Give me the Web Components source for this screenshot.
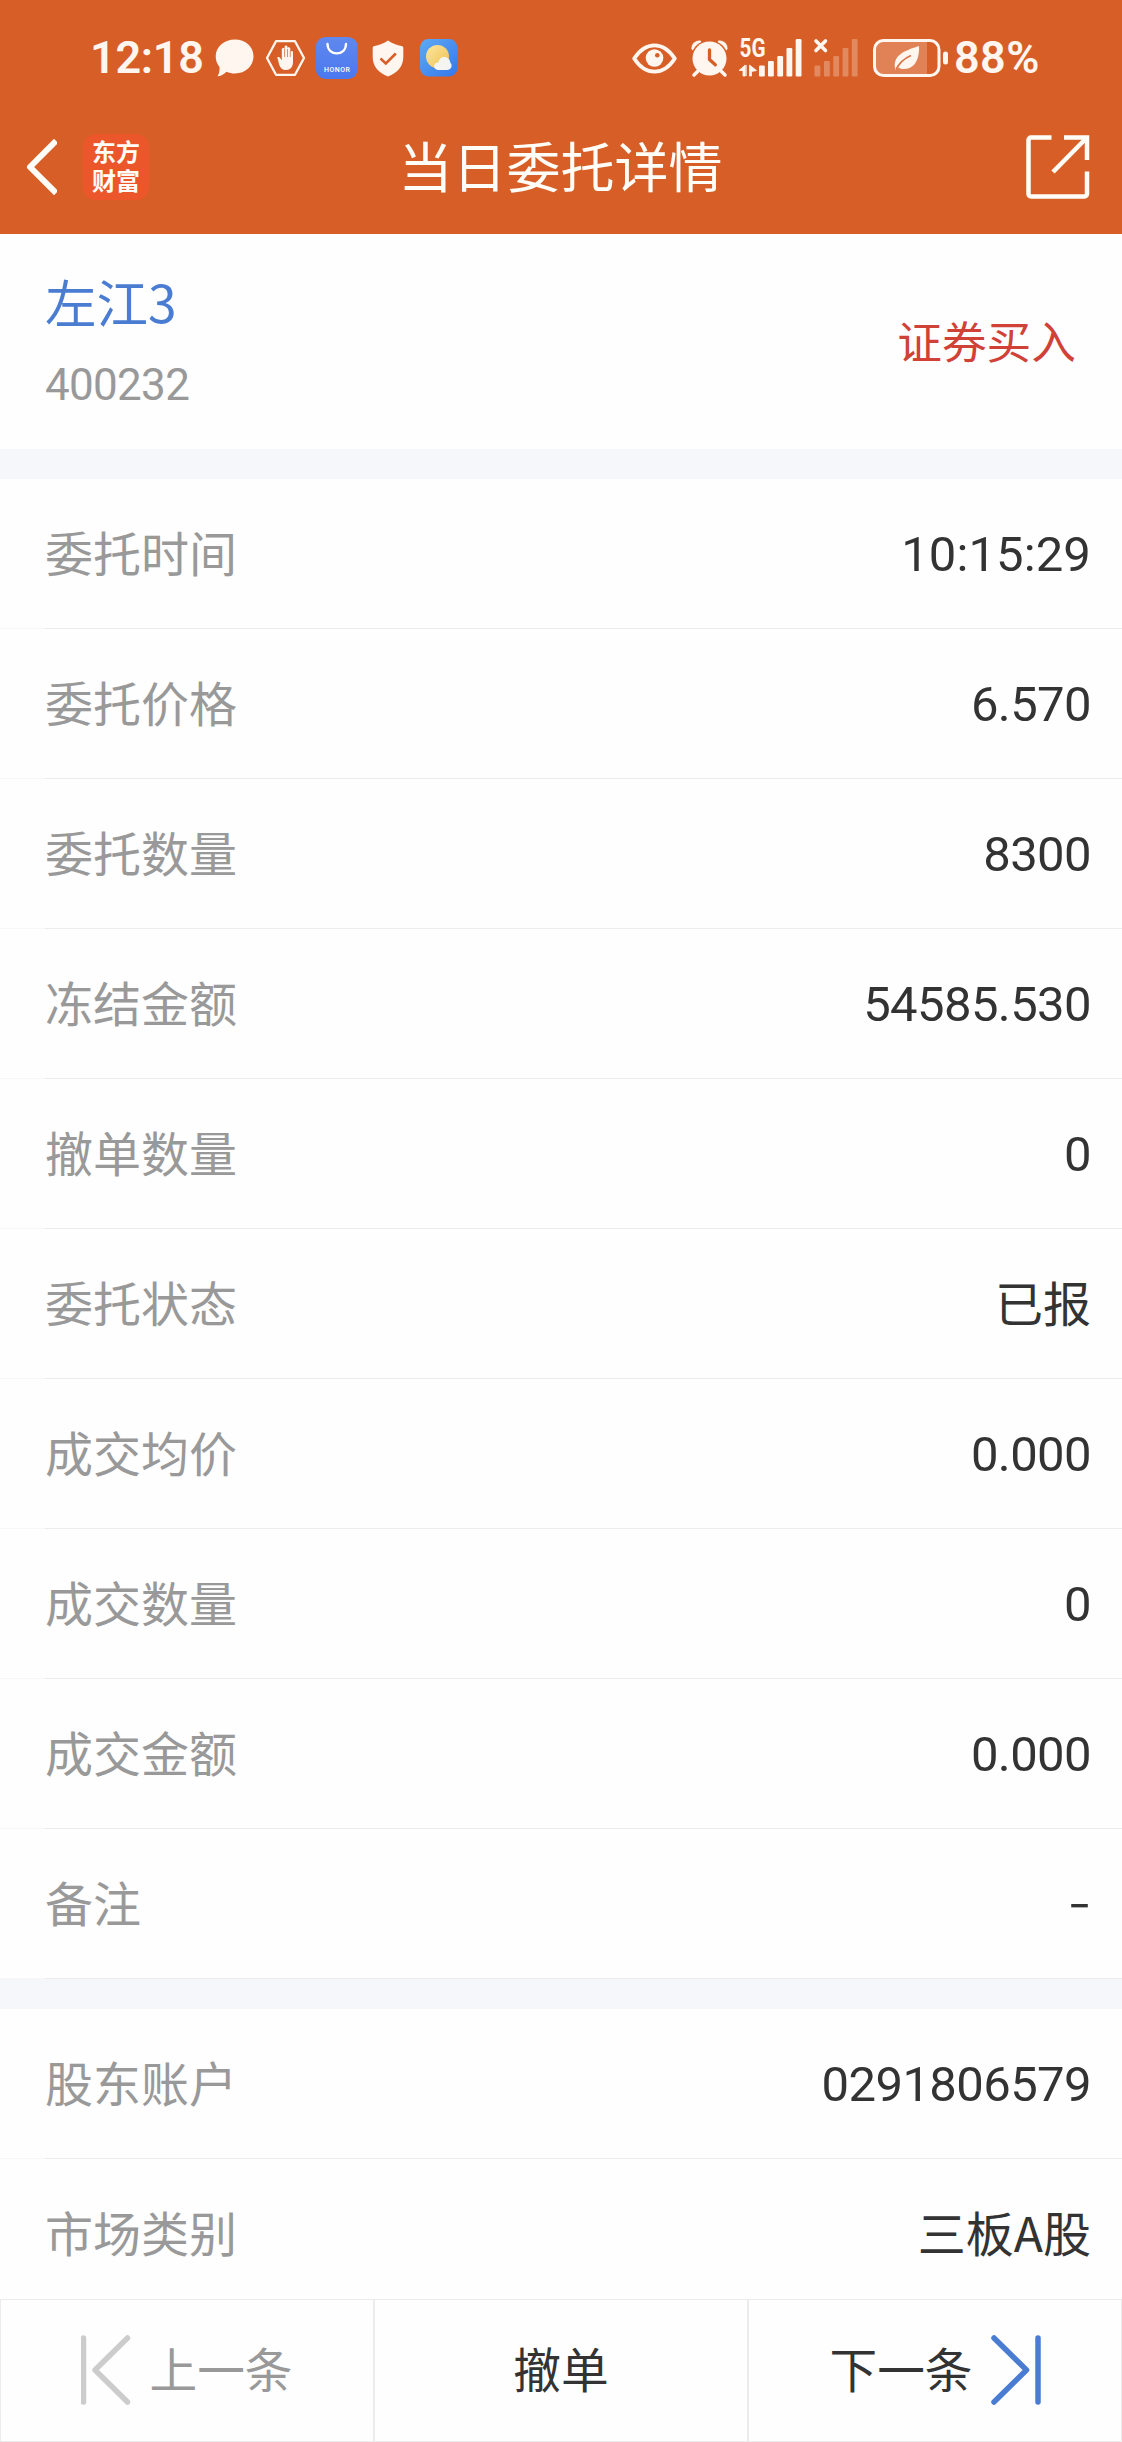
<!DOCTYPE html>
<html lang="zh-CN">
<head>
<meta charset="utf-8">
<title>当日委托详情</title>
<style>
  html, body {
    margin: 0;
    background: #fefefe;
  }

  body {
    font-family: "Noto Sans CJK SC", sans-serif;
    color: #333;
  }
</style>
</head>
<body>
<order-page>
  <status-bar slot="top" time="12:18" battery="88%"></status-bar>
  <title-bar slot="top">当日委托详情</title-bar>

  <stock-head code="400232" side="证券买入">左江3</stock-head>
  <detail-group>
    <detail-row label="委托时间" num="time">10:15:29</detail-row>
    <detail-row label="委托价格" num>6.570</detail-row>
    <detail-row label="委托数量" num>8300</detail-row>
    <detail-row label="冻结金额" num>54585.530</detail-row>
    <detail-row label="撤单数量" num>0</detail-row>
    <detail-row label="委托状态">已报</detail-row>
    <detail-row label="成交均价" num>0.000</detail-row>
    <detail-row label="成交数量" num>0</detail-row>
    <detail-row label="成交金额" num>0.000</detail-row>
    <detail-row label="备注" dash>-</detail-row>
  </detail-group>
  <detail-group>
    <detail-row label="股东账户" num>0291806579</detail-row>
    <detail-row label="市场类别">三板A股</detail-row>
  </detail-group>

  <action-bar slot="bottom"></action-bar>
</order-page>

<script>
class OrderPage extends HTMLElement {
  constructor() {
    super();
    this.attachShadow({ mode: 'open' });
    this.shadowRoot.innerHTML = `
      <style>
        :host {
          display: flex;
          flex-direction: column;
          width: 1122px;
          height: 2442px;
          overflow: hidden;
        }

        header {
          background: #d75f27;
          flex: none;
        }

        main {
          flex: 1;
          min-height: 0;
          overflow: hidden;
        }

        footer {
          flex: none;
        }
      </style>
      <header><slot name="top"></slot></header>
      <main><slot></slot></main>
      <footer><slot name="bottom"></slot></footer>
    `;
  }
}

class StatusBar extends HTMLElement {
  constructor() {
    super();
    this.attachShadow({ mode: 'open' });
    this.shadowRoot.innerHTML = `
      <style>
        :host {
          display: flex;
          justify-content: space-between;
          box-sizing: border-box;
          height: 100px;
          padding: 16px 82px 0 90px;
          color: #fff6f0;
          font: 600 45px/84px Roboto, sans-serif;
        }

        div {
          display: flex;
          align-items: center;
        }

        svg {
          display: block;
          flex: none;
          overflow: visible;
          fill: #fff6f0;
        }

        .time {
          width: 125px;
          letter-spacing: -0.3px;
          white-space: nowrap;
        }

        .level {
          margin-left: 5px;
          width: 86px;
          letter-spacing: 0.4px;
          white-space: nowrap;
        }
      </style>
      <div>
        <span class="time">${this.getAttribute('time')}</span>
        <!-- message -->
        <svg width="39" height="38" viewBox="0 0 39 38">
          <path d="M20 0.500C30.500 0.500 38.500 7.500 38.500 17.300S30.500 34.500 20 34.500c-3.200 0-6-.6-8.500-1.800C9 35.500 5.500 37 2.500 37.300 4.200 34.500 4.800 31.500 4.500 28 2 25 .700 21.500.700 17.300.700 7.500 9.500.500 20 .500z"/>
        </svg>
        <!-- blocked -->
        <svg width="41" height="38" viewBox="0 0 41 38" style="margin-left:11px">
          <path d="M11 2.200h19L39 19 30 35.800H11L2 19z" fill="none" stroke="#fff6f0" stroke-width="2.300" stroke-linejoin="round"/>
          <path d="M12.300 18.500c1-.9 2.500-.2 3.200 1l1.300 2V10.500c0-2 2.800-2 2.800 0V8c0-2 2.900-2 2.900 0v1.500c.3-1.800 2.800-1.500 2.800.300V13c.3-1.600 2.700-1.400 2.700.4V23c0 4.800-2.600 8-7 8-3.600 0-5.500-2-6.700-5z"/>
          <path d="M19.600 10v8M22.500 10v8M25.300 12v6" stroke="#d75f27" stroke-width=".7"/>
        </svg>
        <!-- app market -->
        <svg width="42" height="42" viewBox="0 0 42 42" style="margin-left:10px">
          <defs>
            <linearGradient id="m" x1="0" y1="0" x2="0" y2="1">
              <stop offset="0" stop-color="#6088ee"/>
              <stop offset="1" stop-color="#4a78f0"/>
            </linearGradient>
          </defs>
          <rect width="41.500" height="42" rx="9.500" fill="url(#m)"/>
          <path d="M11.500 7c0 12.500 18.500 12.500 18.500 0" fill="none" stroke="#fff" stroke-width="2.300" stroke-linecap="round"/>
          <text x="8" y="34.500" font-family="Roboto, sans-serif" font-size="7" font-weight="500" fill="#fff" textLength="26" lengthAdjust="spacing">HONOR</text>
        </svg>
        <!-- shield -->
        <svg width="32" height="37" viewBox="0 0 32 37" style="margin-left:14px">
          <path d="M16 .5C20 3.500 25 5.300 29.500 6c1.200.2 1.800.9 1.800 2v9c0 9.500-6 16-15.300 19.500C6.700 33 .7 26.500.7 17V8c0-1.100.600-1.800 1.800-2C7 5.300 12 3.500 16 .5z"/>
          <path d="M8.500 18.500l5.300 5 10-10" fill="none" stroke="#d75f27" stroke-width="2.600"/>
        </svg>
        <!-- weather -->
        <svg width="38" height="38" viewBox="0 0 38 38" style="margin-left:16px">
          <defs>
            <linearGradient id="w" x1="0" y1="0" x2="1" y2="1">
              <stop offset="0" stop-color="#5eaaf5"/>
              <stop offset="1" stop-color="#3577ea"/>
            </linearGradient>
            <linearGradient id="s" x1="0" y1="0" x2="1" y2="1">
              <stop offset="0" stop-color="#fbe7a0"/>
              <stop offset="1" stop-color="#f0c04e"/>
            </linearGradient>
          </defs>
          <rect width="37.500" height="37.500" rx="8.500" fill="url(#w)"/>
          <circle cx="17.500" cy="17.500" r="11.500" fill="url(#s)"/>
          <path d="M18 31c-5.500-.5-5-7.500.5-7.500.8-7.500 11-7.500 12 .5 2 1.500 1.500 7-3.500 7z" fill="#f4f5f1"/>
        </svg>
      </div>
      <div>
        <!-- eye comfort -->
        <svg width="45" height="31" viewBox="0 0 45 31">
          <path d="M2.200 15.500C8 6.500 14.500 2.300 22.500 2.300S37 6.500 42.800 15.500C37 24.500 30.500 28.700 22.500 28.700S8 24.500 2.200 15.500z" fill="none" stroke="#fff6f0" stroke-width="3.800" stroke-linejoin="round"/>
          <circle cx="22.500" cy="15" r="8.800"/>
          <circle cx="25.300" cy="12.200" r="2.300" fill="#d75f27"/>
        </svg>
        <!-- alarm -->
        <svg width="37" height="37" viewBox="0 0 37 37" style="margin-left:14px">
          <circle cx="18.500" cy="18.500" r="17"/>
          <path d="M0 9C0 3.500 4 0 9.500 0L11 2.200C6.500 4 3.700 7 2 11zM37 9C37 3.500 33 0 27.500 0L26 2.200C30.500 4 33.300 7 35 11z" stroke="#d75f27" stroke-width=".8"/>
          <path d="M7 31l-4 4M30 31l4 4" stroke="#fff6f0" stroke-width="3.500" stroke-linecap="round"/>
          <path d="M18.500 10v9.500l5.800 5.300" fill="none" stroke="#d75f27" stroke-width="3.300" stroke-linecap="round" stroke-linejoin="round"/>
        </svg>
        <!-- sim 1 -->
        <svg width="64" height="38" viewBox="0 0 64 38" style="margin-left:11px">
          <text x="0.500" y="18" font-family="Roboto, sans-serif" font-size="25" font-weight="700" textLength="26" lengthAdjust="spacingAndGlyphs">5G</text>
          <path d="M6.300 26v11H4v-5.500H0zM7.300 26V37M10.500 26v11h2v-4.500l5-1z" stroke="#fff6f0" stroke-width=".8"/>
          <rect x="20" y="26.500" width="5.800" height="11" rx="1.200"/>
          <rect x="29" y="22" width="5.800" height="15.500" rx="1.200"/>
          <rect x="38.300" y="17" width="5.800" height="20.500" rx="1.200"/>
          <rect x="47.500" y="9" width="5.800" height="28.500" rx="1.200"/>
          <rect x="56.700" y="0" width="5.800" height="37.500" rx="1.200"/>
        </svg>
        <!-- sim 2 -->
        <svg width="45" height="38" viewBox="0 0 45 38" style="margin-left:11px">
          <path d="M2 2l9.500 9.500M11.500 2L2 11.500" stroke="#fff6f0" stroke-width="3.600" stroke-linecap="round"/>
          <g opacity=".28">
            <rect x=".5" y="26.500" width="5.800" height="11" rx="1.200"/>
            <rect x="10" y="22" width="5.800" height="15.500" rx="1.200"/>
            <rect x="19.300" y="17" width="5.800" height="20.500" rx="1.200"/>
            <rect x="28.600" y="9" width="5.800" height="28.500" rx="1.200"/>
            <rect x="37.800" y="0" width="5.800" height="37.500" rx="1.200"/>
          </g>
        </svg>
        <!-- battery -->
        <svg width="76" height="38" viewBox="0 0 76 38" style="margin-left:14px">
          <path d="M10 2h44v34H10a8 8 0 0 1-8-8V10a8 8 0 0 1 8-8z" opacity=".23"/>
          <rect x="1.500" y="1.500" width="64.500" height="35" rx="9" fill="none" stroke="#fff6f0" stroke-width="3"/>
          <rect x="70" y="12.500" width="5" height="13" rx="2.500"/>
          <path d="M46 7c.6 12-3.500 23-15 23-2 0-4-.5-5.200-1.500L22.500 31C19 17 30 12 46 7z"/>
          <path d="M23 30.500c3.500-7 8-11 15-14" fill="none" stroke="#dd7546" stroke-width="1.800"/>
        </svg>
        <span class="level">${this.getAttribute('battery')}</span>
      </div>
    `;
  }
}

class TitleBar extends HTMLElement {
  constructor() {
    super();
    this.attachShadow({ mode: 'open' });
    this.shadowRoot.innerHTML = `
      <style>
        :host {
          display: grid;
          grid-template-columns: 1fr auto 1fr;
          align-items: center;
          box-sizing: border-box;
          height: 134px;
          padding: 0 32px 0 24px;
          color: #fffdf8;
        }

        .left {
          display: flex;
          align-items: center;
        }

        .logo {
          width: 66px;
          height: 66px;
          box-sizing: border-box;
          margin-left: 26px;
          padding-top: 4px;
          border-radius: 13px;
          background: #ec562b;
          font-family: "Liberation Sans", "Noto Sans CJK SC", sans-serif;
          font-size: 24px;
          font-weight: 700;
          line-height: 29px;
          text-align: center;
        }

        h1 {
          margin: 0;
          padding: 0 0 5px 7px;
          font-size: 54px;
          font-weight: 400;
          line-height: 80px;
        }

        .share {
          justify-self: end;
        }

        svg {
          display: block;
          fill: none;
          stroke: #fffdf8;
        }
      </style>
      <div class="left">
        <svg width="33" height="56" viewBox="0 0 33 56">
          <path d="M30 4L6 28l24 24" stroke-width="6" stroke-linecap="square" stroke-linejoin="round"/>
        </svg>
        <div class="logo">东方<br>财富</div>
      </div>
      <h1><slot></slot></h1>
      <svg class="share" width="64" height="64" viewBox="0 0 64 64" stroke-width="4.500">
        <path d="M25.500 2.500H5a2.500 2.500 0 0 0-2.500 2.500V59A2.500 2.500 0 0 0 5 61.500H58.500A2.500 2.500 0 0 0 61 59V36.500"/>
        <path d="M38 2.500H61V25M60 3.500L27 37"/>
      </svg>
    `;
  }
}

class StockHead extends HTMLElement {
  constructor() {
    super();
    this.attachShadow({ mode: 'open' });
    this.shadowRoot.innerHTML = `
      <style>
        :host {
          display: flex;
          justify-content: space-between;
          align-items: center;
          box-sizing: border-box;
          height: 215px;
          padding: 0 46px 0 45px;
        }

        .info {
          padding-top: 4px;
        }

        .name {
          color: #4a7dd2;
          font-size: 51.500px;
          line-height: 77px;
        }

        .code {
          padding-top: 6px;
          color: #999;
          font: 44px/80px Roboto, sans-serif;
          letter-spacing: -0.7px;
        }

        .side {
          padding-bottom: 3px;
          color: #d04137;
          font-size: 44.700px;
          line-height: 68px;
        }
      </style>
      <div class="info">
        <div class="name"><slot></slot></div>
        <div class="code">${this.getAttribute('code')}</div>
      </div>
      <div class="side">${this.getAttribute('side')}</div>
    `;
  }
}

class DetailGroup extends HTMLElement {
  constructor() {
    super();
    this.attachShadow({ mode: 'open' });
    this.shadowRoot.innerHTML = `
      <style>
        :host {
          display: block;
          border-top: 30px solid #f6f7fa;
        }
      </style>
      <slot></slot>
    `;
  }
}

class DetailRow extends HTMLElement {
  constructor() {
    super();
    this.attachShadow({ mode: 'open' });
    this.shadowRoot.innerHTML = `
      <style>
        :host {
          display: flex;
          justify-content: space-between;
          align-items: center;
          box-sizing: border-box;
          height: 150px;
          padding: 0 31px 6px 45px;
          font-size: 48px;
          line-height: 72px;
          background: linear-gradient(90deg, #f7f7f7 45px, #ececec 45px) bottom / 100% 1px no-repeat;
        }

        .label {
          color: #999;
        }

        :host([num]) .value {
          padding-top: 7px;
          font-family: Roboto, sans-serif;
          font-size: 49px;
          letter-spacing: -0.6px;
        }

        :host([num="time"]) .value {
          letter-spacing: 0.1px;
        }

        :host([dash]) .value {
          padding-bottom: 7px;
          transform: scaleX(1.35);
          transform-origin: right;
        }
      </style>
      <span class="label">${this.getAttribute('label')}</span>
      <span class="value"><slot></slot></span>
    `;
  }
}

class ActionBar extends HTMLElement {
  constructor() {
    super();
    this.attachShadow({ mode: 'open' });
    this.shadowRoot.innerHTML = `
      <style>
        :host {
          display: grid;
          grid-template-columns: repeat(3, 1fr);
          height: 143px;
          background: #fefefe;
          font-size: 47.700px;
          line-height: 72px;
        }

        div {
          display: flex;
          justify-content: center;
          align-items: center;
          border: 1px solid #ececec;
        }

        span {
          padding-bottom: 5px;
        }

        .prev {
          color: #999;
        }

        svg {
          fill: none;
          margin-bottom: 2px;
          stroke-width: 5.500;
          stroke-linecap: round;
          stroke-linejoin: round;
        }

        .prev svg {
          stroke: #ccc;
          margin-right: 18px;
        }

        .next svg {
          stroke: #4a7dd2;
          margin-left: 18px;
        }
      </style>
      <div class="prev">
        <svg width="50" height="76" viewBox="0 0 50 76"><path d="M2.500 6v64M46.500 6L14 38l32.500 32"/></svg>
        <span>上一条</span>
      </div>
      <div><span>撤单</span></div>
      <div class="next">
        <span>下一条</span>
        <svg width="50" height="76" viewBox="0 0 50 76"><path d="M47 6v64M3 6l32.500 32L3 70"/></svg>
      </div>
    `;
  }
}

customElements.define('order-page', OrderPage);
customElements.define('status-bar', StatusBar);
customElements.define('title-bar', TitleBar);
customElements.define('stock-head', StockHead);
customElements.define('detail-group', DetailGroup);
customElements.define('detail-row', DetailRow);
customElements.define('action-bar', ActionBar);
</script>
</body>
</html>
